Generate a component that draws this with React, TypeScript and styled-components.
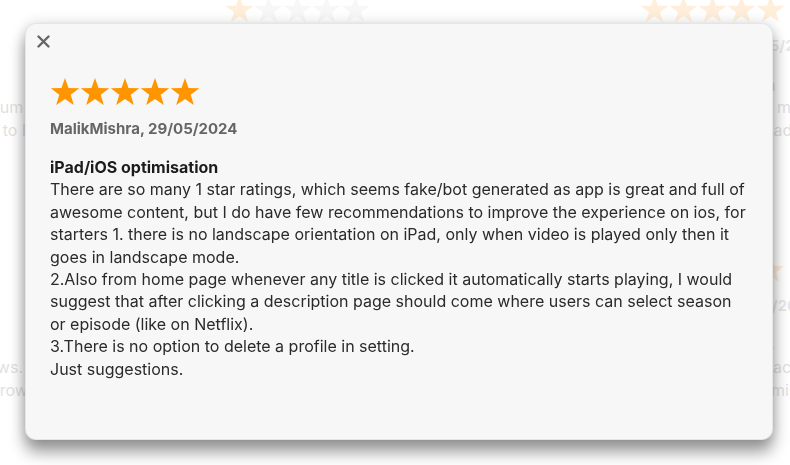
import styled, { createGlobalStyle } from "styled-components";

const GlobalStyle = createGlobalStyle`
  * {
    box-sizing: border-box;
  }
  body {
    margin: 0;
    background: #ffffff;
    font-family: Inter, "Noto Sans", "Liberation Sans", sans-serif;
    color: #222222;
  }
`;

type Review = {
  stars: number;
  author: string;
  title: string;
  body: string;
};

// the faded cards behind the open review
const backdropReviews: Review[] = [
  {
    stars: 5,
    author: "SamuelK, 02/06/2024",
    title: "Great premium content",
    body: "Really enjoying the premium shows and old films. Good Christmas specials to keep me busy, it does help.",
  },
  {
    stars: 1,
    author: "JennyR, 30/05/2024",
    title: "Keeps crashing",
    body: "Every time I try to open a show the app freezes and I have to restart my phone.",
  },
  {
    stars: 5,
    author: "ChrisWoods, 15/05/2024",
    title: "Brilliant selection",
    body: "Easily worth it, so many 1 off specials and series. Good, but please add downloads to watch offline.",
  },
  {
    stars: 4,
    author: "Tomasz, 21/05/2024",
    title: "Mostly good",
    body: "Nice app with lots of shows. Would like better search and a continue watching row.",
  },
  {
    stars: 3,
    author: "Priya, 18/05/2024",
    title: "Loading issues",
    body: "Content keeps loading, subscription renewed fine but nothing plays for days. Fix the entire catalogue.",
  },
  {
    stars: 5,
    author: "OldFilmFan, 12/05/2024",
    title: "Love the classics",
    body: "Endless classics, access to the collection is great, only downside is missing subtitles in some titles.",
  },
];

const focusReview: Review = {
  stars: 5,
  author: "MalikMishra, 29/05/2024",
  title: "iPad/iOS optimisation",
  body: `There are so many 1 star ratings, which seems fake/bot generated as app is great and full of awesome content, but I do have few recommendations to improve the experience on ios, for starters 1. there is no landscape orientation on iPad, only when video is played only then it goes in landscape mode.
2.Also from home page whenever any title is clicked it automatically starts playing, I would suggest that after clicking a description page should come where users can select season or episode (like on Netflix).
3.There is no option to delete a profile in setting.
Just suggestions.`,
};

const StarIcon = ({ filled, size }: { filled: boolean; size: number }) => (
  <svg width={size} height={size} viewBox="0 0 100 100">
    <polygon
      points="50,3 61.76,36.82 97.55,37.55 69.02,59.18 79.39,93.45 50,73 20.61,93.45 30.98,59.18 2.45,37.55 38.24,36.82"
      fill={filled ? "#ff9500" : "#c8c8c8"}
    />
  </svg>
);

const Stars = ({ count, size }: { count: number; size: number }) => (
  <StarRow>
    {[0, 1, 2, 3, 4].map((i) => (
      <StarIcon key={i} filled={i < count} size={size} />
    ))}
  </StarRow>
);

const App = () => {
  return (
    <>
      <GlobalStyle />
      <Page>
        <Backdrop aria-hidden="true">
          {backdropReviews.map((r, i) => (
            <BackdropCard key={i}>
              <Stars count={r.stars} size={29} />
              <Author>{r.author}</Author>
              <Title $gap={18}>{r.title}</Title>
              <Body>{r.body}</Body>
            </BackdropCard>
          ))}
        </Backdrop>
      </Page>
      <Dialog role="dialog">
        <CloseButton aria-label="Close">
          <svg width="13" height="13" viewBox="0 0 13 13">
            <path
              d="M1.5 1.5 L11.5 11.5 M11.5 1.5 L1.5 11.5"
              stroke="#666666"
              strokeWidth="2.4"
              strokeLinecap="round"
            />
          </svg>
        </CloseButton>
        <DialogContent>
          <Stars count={focusReview.stars} size={30} />
          <Author>{focusReview.author}</Author>
          <Title $gap={17}>{focusReview.title}</Title>
          <Body>{focusReview.body}</Body>
        </DialogContent>
      </Dialog>
    </>
  );
};

const Page = styled.div`
  width: 100vw;
  height: 100vh;
  overflow: hidden;
`;

const Backdrop = styled.div`
  display: grid;
  grid-template-columns: repeat(3, 400px);
  grid-auto-rows: 250px;
  row-gap: 10px;
  column-gap: 15px;
  margin-left: -190px;
  margin-top: -5px;
  opacity: 0.14;
`;

const BackdropCard = styled.div`
  display: flex;
  flex-direction: column;
  overflow: hidden;
`;

const StarRow = styled.div`
  display: flex;
  gap: 0;
  & > svg {
    display: block;
  }
`;

const Author = styled.div`
  margin-top: 12px;
  font-size: 15px;
  line-height: 20px;
  font-weight: 700;
  color: #666666;
`;

const Title = styled.div<{ $gap: number }>`
  margin-top: ${(p) => p.$gap}px;
  font-size: 16px;
  line-height: 22.4px;
  font-weight: 700;
  color: #1c1c1c;
`;

const Body = styled.div`
  font-size: 16px;
  line-height: 22.4px;
  color: #2a2a2a;
  white-space: pre-line;
`;

const Dialog = styled.div`
  position: fixed;
  top: 23px;
  left: 25px;
  right: 17px;
  bottom: 25px;
  background: #f7f7f7;
  border: 1px solid rgba(0, 0, 0, 0.07);
  border-radius: 11px;
  box-shadow: 0 12px 16px rgba(0, 0, 0, 0.4), 0 0 14px rgba(0, 0, 0, 0.14);
  padding: 11px 24px 0 24px;
  display: flex;
  flex-direction: column;
`;

const CloseButton = styled.button`
  align-self: flex-start;
  margin-left: -13px;
  padding: 0;
  border: none;
  background: none;
  width: 13px;
  height: 13px;
  cursor: pointer;
  & > svg {
    display: block;
  }
`;

const DialogContent = styled.div`
  margin-top: 29px;
  display: flex;
  flex-direction: column;
`;

export default App;
